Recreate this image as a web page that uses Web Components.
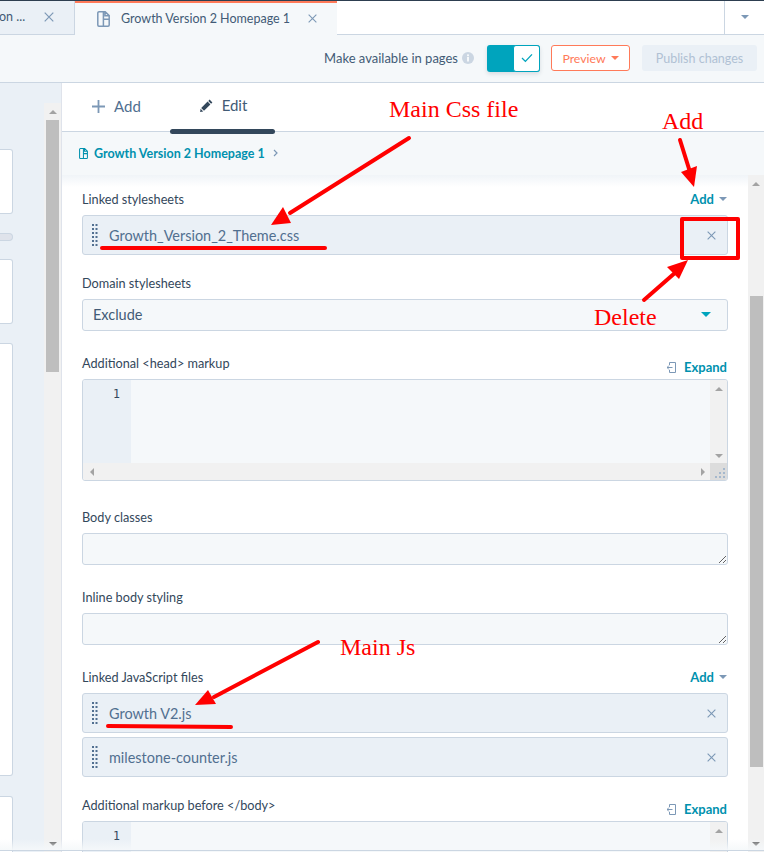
<!DOCTYPE html>
<html>
<head>
<meta charset="utf-8">
<title>Growth Version 2 Homepage 1</title>
<style>
    html, body { margin: 0; padding: 0; background: #fff; }
    body { font-family: "Lato", "Noto Sans", sans-serif; color: #33475b; }
</style>
</head>
<body>
<app-shell></app-shell>

<script>
const ICONS = {
    close: `<svg style="display:block" width="100%" height="100%" viewBox="0 0 10 10"><path d="M.7.7l8.600 8.600M9.300.7L.7 9.300" fill="none" stroke="currentColor" stroke-width="1.200"/></svg>`,
    doc: `<svg style="display:block" width="100%" height="100%" viewBox="0 0 13 16"><path d="M2 .8h6.200L12.200 4.600V14a1.200 1.200 0 0 1-1.200 1.200H2A1.200 1.200 0 0 1 .8 14V2A1.200 1.200 0 0 1 2 .8zM6.400 1v14M6.400 8.200h5.800M8 1v3.800h4" fill="none" stroke="currentColor" stroke-width="1.500"/></svg>`,
};

class AppTabs extends HTMLElement {
    constructor() {
        super();
        this.attachShadow({ mode: 'open' });
        this.shadowRoot.innerHTML = `
            <style>
                :host { display: flex; height: 35px; box-sizing: border-box; border-top: 1px solid #2d3e50; font-size: 12.5px; color: #425b76; }
                .old { width: 75px; box-sizing: border-box; background: #eaf0f6; border-right: 1px solid #cbd6e2; border-bottom: 1px solid #cbd6e2; display: flex; align-items: center; padding-bottom: 2px; overflow: hidden; }
                .old span { width: 45px; margin-left: -1px; white-space: nowrap; }
                .x { color: #7c98b6; display: block; }
                .old .x { width: 10px; height: 10px; }
                .active { width: 262px; box-sizing: border-box; background: #f5f8fa; border-top: 2px solid #ff7a59; display: flex; align-items: center; padding-left: 22px; padding-bottom: 1px; }
                .active .doc { width: 13px; height: 16px; color: #7c98b6; margin-right: 11px; }
                .active .x { width: 9px; height: 9px; margin-left: 18px; }
                .rest { flex: 1; border-bottom: 1px solid #cbd6e2; display: flex; justify-content: flex-end; }
                .more { width: 39px; border-left: 1px solid #cbd6e2; display: flex; align-items: center; justify-content: center; padding-bottom: 1px; }
                .caret { width: 0; height: 0; border: 4.500px solid transparent; border-top: 4.500px solid #7c98b6; border-bottom: 0; }
            </style>
            <div class="old"><span>on ...</span><i class="x">${ICONS.close}</i></div>
            <div class="active"><i class="doc">${ICONS.doc}</i><span>Growth Version 2 Homepage 1</span><i class="x">${ICONS.close}</i></div>
            <div class="rest"><div class="more"><i class="caret"></i></div></div>
        `;
    }
}

class AppToolbar extends HTMLElement {
    constructor() {
        super();
        this.attachShadow({ mode: 'open' });
        this.shadowRoot.innerHTML = `
            <style>
                :host { display: flex; align-items: center; justify-content: flex-end; height: 48px; box-sizing: border-box; padding: 0 7px 1px 0; background: #f5f8fa; border-bottom: 1px solid #cbd6e2; font-size: 13px; color: #425b76; }
                .info { width: 12px; height: 12px; margin: 0 13px 0 4px; }
                .toggle { width: 53px; height: 27px; position: relative; background: #00a4bd; border-radius: 3px; margin-right: 11px; box-shadow: 0 2px 4px rgba(45,62,80,.15); }
                .knob { position: absolute; right: 0; top: 0; width: 27px; height: 27px; box-sizing: border-box; background: #fff; border: 1px solid #00a4bd; border-radius: 3px; display: flex; align-items: center; justify-content: center; }
                .preview { width: 79px; height: 26px; box-sizing: border-box; border: 1px solid #ff7a59; border-radius: 3px; background: #fff; color: #ff7a59; display: flex; align-items: center; justify-content: center; gap: 5px; margin-right: 12px; font-size: 12.300px; }
                .caret { width: 0; height: 0; border: 4px solid transparent; border-top: 4px solid #ff7a59; border-bottom: 0; }
                .publish { width: 115px; height: 26px; border-radius: 3px; background: #eaf0f6; color: #b0c1d4; display: flex; align-items: center; justify-content: center; font-size: 12.500px; }
            </style>
            <span>Make available in pages</span>
            <svg class="info" viewBox="0 0 12 12"><circle cx="6" cy="6" r="6" fill="#cbd6e2"/><rect x="5" y="5" width="2" height="4.500" fill="#f5f8fa"/><rect x="5" y="2.400" width="2" height="1.800" fill="#f5f8fa"/></svg>
            <div class="toggle"><div class="knob"><svg width="12" height="10" viewBox="0 0 12 10"><path d="M1 5l3.400 3.400L11 1.400" fill="none" stroke="#00a4bd" stroke-width="1.300"/></svg></div></div>
            <div class="preview"><span>Preview</span><i class="caret"></i></div>
            <div class="publish">Publish changes</div>
        `;
    }
}

class FakeScrollbar extends HTMLElement {
    connectedCallback() {
        this.attachShadow({ mode: 'open' });
        const offset = this.getAttribute('offset') || 0;
        const size = this.getAttribute('size') || 100;
        this.shadowRoot.innerHTML = `
            <style>
                :host { display: flex; flex-direction: column; width: 17px; background: #f1f1f1; flex: none; }
                .btn { height: 17px; display: flex; align-items: center; justify-content: center; flex: none; }
                .up { width: 0; height: 0; border: 4px solid transparent; border-bottom: 4px solid #a3a3a3; border-top: 0; }
                .down { width: 0; height: 0; border: 4px solid transparent; border-top: 4px solid #505050; border-bottom: 0; }
                .space { flex: 1; }
                .thumb { width: 13px; margin: ${offset}px 2px 0; height: ${size}px; background: #bebebe; }
            </style>
            <div class="btn"><i class="up"></i></div>
            <div class="thumb"></div>
            <div class="space"></div>
            <div class="btn"><i class="down"></i></div>
        `;
    }
}

class SidePanel extends HTMLElement {
    constructor() {
        super();
        this.attachShadow({ mode: 'open' });
        this.shadowRoot.innerHTML = `
            <style>
                :host { display: flex; width: 62px; flex: none; box-sizing: border-box; background: #eaf0f6; border-right: 1px solid #dfe3eb; }
                .cards { width: 44px; box-sizing: border-box; padding: 66px 31px 0 0; display: flex; flex-direction: column; }
                .card { background: #fff; border: 1px solid #cbd6e2; border-left: 0; border-radius: 0 3px 3px 0; flex: none; box-sizing: border-box; }
                .pill { height: 8px; background: #dfe3eb; border: 1px solid #cbd6e2; border-left: 0; border-radius: 0 4px 4px 0; margin: 19px 0 18px; flex: none; box-sizing: border-box; }
                fake-scrollbar { margin-top: 20px; }
            </style>
            <div class="cards">
                <div class="card" style="height:65px"></div>
                <div class="pill"></div>
                <div class="card" style="height:65px"></div>
                <div class="card" style="height:433px;margin-top:19px"></div>
                <div class="card" style="height:60px;margin-top:20px"></div>
            </div>
            <fake-scrollbar offset="0" size="252"></fake-scrollbar>
        `;
    }
}

class PanelTabs extends HTMLElement {
    constructor() {
        super();
        this.attachShadow({ mode: 'open' });
        this.shadowRoot.innerHTML = `
            <style>
                :host { display: flex; height: 49px; box-sizing: border-box; border-bottom: 1px solid #cbd6e2; font-size: 15px; color: #516f90; padding-left: 30px; }
                .tab { display: flex; align-items: center; gap: 9px; height: 48px; box-sizing: border-box; }
                .tab span { position: relative; top: -1px; }
                .add { width: 78px; padding-bottom: 1px; }
                .edit { width: 105px; color: #425b76; justify-content: center; position: relative; padding-bottom: 3px; padding-left: 2px; }
                .edit::after { content: ""; position: absolute; left: 0; right: 0; bottom: -3px; height: 5px; background: #33475b; border-radius: 3px; }
            </style>
            <div class="tab add">
                <svg width="13" height="13" viewBox="0 0 13 13"><path d="M6.500 0v13M0 6.500h13" stroke="#7c98b6" stroke-width="1.800"/></svg>
                <span>Add</span>
            </div>
            <div class="tab edit">
                <svg width="13" height="13" viewBox="0 0 13 13"><path d="M9.600.6l2.800 2.800-1.300 1.300-2.800-2.800zM7.600 2.600l2.800 2.800L4 11.800 1.200 9zM.6 9.800l2.600 2.600-3.100.6z" fill="#33475b"/></svg>
                <span>Edit</span>
            </div>
        `;
    }
}

class BreadCrumb extends HTMLElement {
    constructor() {
        super();
        this.attachShadow({ mode: 'open' });
        this.shadowRoot.innerHTML = `
            <style>
                :host { display: flex; align-items: center; height: 43px; box-sizing: border-box; background: #f5f8fa; padding: 0 0 1px 17px; font-size: 12.500px; font-weight: 700; color: #0091ae; }
                i { display: block; width: 9px; height: 11px; margin-right: 6px; }
                svg.arrow { margin-left: 8px; }
            </style>
            <i>${ICONS.doc}</i>
            <span>${this.textContent}</span>
            <svg class="arrow" width="5" height="8" viewBox="0 0 5 8"><path d="M1 1l3 3-3 3" fill="none" stroke="#7c98b6" stroke-width="1.200"/></svg>
        `;
    }
}

class FormField extends HTMLElement {
    connectedCallback() {
        this.attachShadow({ mode: 'open' });
        const action = this.getAttribute('action');
        let actionMarkup = '';
        if (action === 'add') {
            actionMarkup = `<span class="action">Add <i class="caret"></i></span>`;
        }
        if (action === 'expand') {
            actionMarkup = `<span class="action expand">
                <svg width="9" height="11" viewBox="0 0 9 11"><path d="M2.500.5h6v10h-6M2.500 3v-2.500M2.500 8v2.500M0 5.500h5.500M2 3.500l-2 2 2 2" fill="none" stroke="#7c98b6" stroke-width="1"/></svg>
                Expand</span>`;
        }
        this.shadowRoot.innerHTML = `
            <style>
                :host { display: block; margin-top: ${this.getAttribute('space') || 24}px; }
                .head { display: flex; justify-content: space-between; height: 16px; line-height: 16px; font-size: 12.700px; color: #33475b; margin-bottom: 8px; }
                .action { color: #0091ae; font-weight: 700; display: flex; align-items: center; gap: 5px; font-size: 13px; padding-right: 1px; }
                .expand { position: relative; top: 4px; gap: 8px; }
                .caret { width: 0; height: 0; border: 4px solid transparent; border-top: 4px solid #7c98b6; border-bottom: 0; }
                .body { display: flex; flex-direction: column; gap: 4px; }
            </style>
            <div class="head"><span>${this.getAttribute('label').replace('<', '&lt;')}</span>${actionMarkup}</div>
            <div class="body"><slot></slot></div>
        `;
    }
}

class LinkedItem extends HTMLElement {
    constructor() {
        super();
        this.attachShadow({ mode: 'open' });
        let dots = '';
        for (let row = 0; row < 6; row++) {
            dots += `<rect x="0" y="${row * 4}" width="2" height="2"/><rect x="3.500" y="${row * 4}" width="2" height="2"/>`;
        }
        this.shadowRoot.innerHTML = `
            <style>
                :host { display: flex; align-items: center; height: 40px; box-sizing: border-box; background: #eaf0f6; border: 1px solid #cbd6e2; border-radius: 3px; font-size: 14.450px; color: #516f90; padding: 0 11px 0 9px; }
                svg.grip { fill: #516f90; flex: none; margin-right: 11px; }
                span { flex: 1; }
                i { display: block; width: 9px; height: 9px; color: #7c98b6; }
            </style>
            <svg class="grip" width="6" height="22" viewBox="0 0 6 22">${dots}</svg>
            <span><slot></slot></span>
            <i>${ICONS.close}</i>
        `;
    }
}

class SelectBox extends HTMLElement {
    constructor() {
        super();
        this.attachShadow({ mode: 'open' });
        this.shadowRoot.innerHTML = `
            <style>
                :host { display: flex; align-items: center; justify-content: space-between; height: 32px; box-sizing: border-box; background: #f5f8fa; border: 1px solid #cbd6e2; border-radius: 3px; font-size: 14.500px; color: #425b76; padding: 0 16px 2px 10px; }
                i { width: 0; height: 0; border: 5px solid transparent; border-top: 5px solid #00a4bd; border-bottom: 0; }
            </style>
            <span><slot></slot></span><i></i>
        `;
    }
}

class CodeEditor extends HTMLElement {
    connectedCallback() {
        this.attachShadow({ mode: 'open' });
        this.shadowRoot.innerHTML = `
            <style>
                :host { display: grid; grid-template-columns: 48px 1fr 17px; grid-template-rows: 1fr 17px; height: ${this.getAttribute('height') || 102}px; box-sizing: border-box; background: #f5f8fa; border: 1px solid #cbd6e2; border-radius: 3px; overflow: hidden; }
                .gutter { background: #eaf0f6; font: 11.500px/28px "DejaVu Sans Mono", monospace; color: #33475b; text-align: right; padding-right: 11px; box-sizing: border-box; }
                .vbar { background: #f1f1f1; display: flex; flex-direction: column; justify-content: space-between; align-items: center; padding: 7px 0 5px; }
                .hbar { grid-column: 1 / 3; background: #f1f1f1; display: flex; justify-content: space-between; align-items: center; padding: 0 5px 0 7px; }
                .corner { background: #dcdcdc; }
                .corner svg { display: block; }
                .up { width: 0; height: 0; border: 4px solid transparent; border-bottom: 4px solid #a3a3a3; border-top: 0; }
                .down { width: 0; height: 0; border: 4px solid transparent; border-top: 4px solid #a3a3a3; border-bottom: 0; }
                .left { width: 0; height: 0; border: 4px solid transparent; border-right: 4px solid #a3a3a3; border-left: 0; }
                .right { width: 0; height: 0; border: 4px solid transparent; border-left: 4px solid #a3a3a3; border-right: 0; }
            </style>
            <div class="gutter">1</div>
            <div></div>
            <div class="vbar"><i class="up"></i><i class="down"></i></div>
            <div class="hbar"><i class="left"></i><i class="right"></i></div>
            <div class="corner"><svg width="17" height="17" viewBox="0 0 17 17" fill="#a5b8cd"><rect x="13" y="5" width="2" height="2"/><rect x="9" y="9" width="2" height="2"/><rect x="13" y="9" width="2" height="2"/><rect x="5" y="13" width="2" height="2"/><rect x="9" y="13" width="2" height="2"/><rect x="13" y="13" width="2" height="2"/></svg></div>
        `;
    }
}

class TextBox extends HTMLElement {
    constructor() {
        super();
        this.attachShadow({ mode: 'open' });
        this.shadowRoot.innerHTML = `
            <style>
                :host { display: block; height: 32px; }
                textarea { display: block; width: 100%; height: 32px; margin: 0; box-sizing: border-box; background: #f5f8fa; border: 1px solid #cbd6e2; border-radius: 3px; resize: vertical; outline: none; }
            </style>
            <textarea></textarea>
        `;
    }
}

class EditorPanel extends HTMLElement {
    constructor() {
        super();
        this.attachShadow({ mode: 'open' });
        this.shadowRoot.innerHTML = `
            <style>
                :host { display: flex; flex-direction: column; flex: 1; min-width: 0; }
                .scroll { flex: 1; display: flex; min-height: 0; background: linear-gradient(#f0f4f8, #fff) top / 100% 12px no-repeat; }
                .form { flex: 1; min-width: 0; padding: 16px 20px 0; overflow: hidden; }
                fake-scrollbar { width: 16px; }
            </style>
            <panel-tabs></panel-tabs>
            <bread-crumb>Growth Version 2 Homepage 1</bread-crumb>
            <div class="scroll">
                <div class="form"><slot></slot></div>
                <fake-scrollbar offset="104" size="471"></fake-scrollbar>
            </div>
        `;
    }
}

class AnnotationLayer extends HTMLElement {
    constructor() {
        super();
        this.attachShadow({ mode: 'open' });
        this.shadowRoot.innerHTML = `
            <style>
                :host { position: absolute; inset: 0; pointer-events: none; font: 24px "Liberation Serif", serif; color: #f00; }
                svg { position: absolute; left: 0; top: 0; }
                span { position: absolute; line-height: 28px; white-space: nowrap; }
            </style>
            <svg width="764" height="852" viewBox="0 0 764 852">
                <g stroke="#f00" stroke-width="4" stroke-linecap="round" fill="none">
                    <path d="M409 138L290 213"/>
                    <path d="M680 140L690 172"/>
                    <path d="M644 300L676 272"/>
                    <path d="M318 642L214 697"/>
                    <path d="M102 248L325 248"/>
                    <path d="M108 726L231 727"/>
                </g>
                <g fill="#f00">
                    <path d="M271 225L283 207 291 223z"/>
                    <path d="M694 187L681 172 697 166z"/>
                    <path d="M688 260L667 267 679 279z"/>
                    <path d="M195 705L208 690 216 704z"/>
                </g>
                <rect x="682" y="219" width="56" height="39" fill="none" stroke="#f00" stroke-width="4" stroke-linejoin="round"/>
            </svg>
            <span style="left:389px;top:95px">Main Css file</span>
            <span style="left:662px;top:107px">Add</span>
            <span style="left:594px;top:303px">Delete</span>
            <span style="left:340px;top:633px">Main Js</span>
        `;
    }
}

class AppShell extends HTMLElement {
    constructor() {
        super();
        this.attachShadow({ mode: 'open' });
        this.shadowRoot.innerHTML = `
            <style>
                :host { display: flex; flex-direction: column; width: 764px; height: 852px; overflow: hidden; position: relative; background: #fff; font-family: "Lato", "Noto Sans", sans-serif; }
                .main { flex: 1; display: flex; min-height: 0; }
                .fade { position: absolute; left: 0; right: 0; bottom: 1px; height: 11px; background: linear-gradient(rgba(245,248,250,0), rgba(245,248,250,.95)); border-bottom: 1px solid #cbd6e2; }
            </style>
            <app-tabs></app-tabs>
            <app-toolbar></app-toolbar>
            <div class="main">
                <side-panel></side-panel>
                <editor-panel>
                    <form-field label="Linked stylesheets" action="add" space="0">
                        <linked-item>Growth_Version_2_Theme.css</linked-item>
                    </form-field>
                    <form-field label="Domain stylesheets" space="20">
                        <select-box>Exclude</select-box>
                    </form-field>
                    <form-field label="Additional <head> markup" action="expand">
                        <code-editor height="102"></code-editor>
                    </form-field>
                    <form-field label="Body classes" space="28">
                        <text-box></text-box>
                    </form-field>
                    <form-field label="Inline body styling">
                        <text-box></text-box>
                    </form-field>
                    <form-field label="Linked JavaScript files" action="add">
                        <linked-item>Growth V2.js</linked-item>
                        <linked-item>milestone-counter.js</linked-item>
                    </form-field>
                    <form-field label="Additional markup before </body>" action="expand" space="20">
                        <code-editor height="102"></code-editor>
                    </form-field>
                </editor-panel>
            </div>
            <div class="fade"></div>
            <annotation-layer></annotation-layer>
        `;
    }
}

customElements.define('app-tabs', AppTabs);
customElements.define('app-toolbar', AppToolbar);
customElements.define('fake-scrollbar', FakeScrollbar);
customElements.define('side-panel', SidePanel);
customElements.define('panel-tabs', PanelTabs);
customElements.define('bread-crumb', BreadCrumb);
customElements.define('form-field', FormField);
customElements.define('linked-item', LinkedItem);
customElements.define('select-box', SelectBox);
customElements.define('code-editor', CodeEditor);
customElements.define('text-box', TextBox);
customElements.define('editor-panel', EditorPanel);
customElements.define('annotation-layer', AnnotationLayer);
customElements.define('app-shell', AppShell);
</script>
</body>
</html>
